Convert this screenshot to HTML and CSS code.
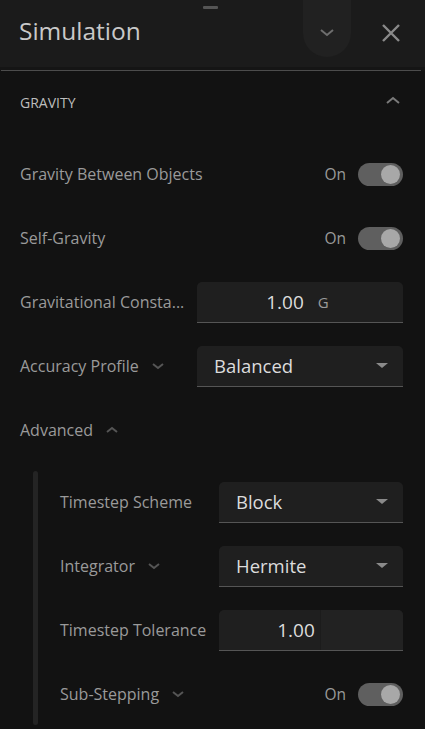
FILE: index.html
```html
<!DOCTYPE html>
<html>
<head>
<meta charset="utf-8">
<link rel="stylesheet" href="styles.css">
</head>
<body>
<div class="sheet">
  <div class="header">
    <div class="handle"></div>
    <h1 class="title">Simulation</h1>
    <div class="header-actions">
      <div class="pill">
        <svg width="16" height="9" viewBox="0 0 16 9"><path d="M2 2 L8 7 L14 2" fill="none" stroke="#6e6e6e" stroke-width="2"/></svg>
      </div>
      <div class="close">
        <svg width="20" height="20" viewBox="0 0 20 20"><path d="M2 2 L18 18 M18 2 L2 18" fill="none" stroke="#8a8a8a" stroke-width="2.4"/></svg>
      </div>
    </div>
  </div>
  <div class="sep"><div class="sep-line"></div></div>

  <div class="section-head">
    <span class="section-title">GRAVITY</span>
    <svg class="sec-chev" width="16" height="9" viewBox="0 0 16 9"><path d="M2 7 L8 2 L14 7" fill="none" stroke="#7a7a7a" stroke-width="2"/></svg>
  </div>

  <div class="rows">
    <div class="row">
      <span class="label">Gravity Between Objects</span>
      <div class="switch-wrap"><span class="on">On</span><span class="toggle"><span class="knob"></span></span></div>
    </div>
    <div class="row">
      <span class="label">Self-Gravity</span>
      <div class="switch-wrap"><span class="on">On</span><span class="toggle"><span class="knob"></span></span></div>
    </div>
    <div class="row">
      <span class="label">Gravitational Consta...</span>
      <div class="field wide number"><span class="num">1.00</span><span class="unit">G</span></div>
    </div>
    <div class="row">
      <span class="label">Accuracy Profile <svg class="lchev" width="14" height="8" viewBox="0 0 14 8"><path d="M2 2 L7 6 L12 2" fill="none" stroke="#555" stroke-width="2"/></svg></span>
      <div class="field wide select"><span class="sel-text">Balanced</span><span class="caret"></span></div>
    </div>
    <div class="row">
      <span class="label">Advanced <svg class="lchev" width="14" height="8" viewBox="0 0 14 8"><path d="M2 6 L7 2 L12 6" fill="none" stroke="#555" stroke-width="2"/></svg></span>
    </div>
  </div>

  <div class="nested">
    <div class="nest-bar"></div>
    <div class="nest-rows">
      <div class="row">
        <span class="label">Timestep Scheme</span>
        <div class="field narrow select"><span class="sel-text">Block</span><span class="caret"></span></div>
      </div>
      <div class="row">
        <span class="label">Integrator <svg class="lchev" width="14" height="8" viewBox="0 0 14 8"><path d="M2 2 L7 6 L12 2" fill="none" stroke="#555" stroke-width="2"/></svg></span>
        <div class="field narrow select"><span class="sel-text">Hermite</span><span class="caret"></span></div>
      </div>
      <div class="row">
        <span class="label">Timestep Tolerance</span>
        <div class="field narrow number"><span class="num">1.00</span><span class="unit"></span><span class="shade"></span></div>
      </div>
      <div class="row">
        <span class="label">Sub-Stepping <svg class="lchev" width="14" height="8" viewBox="0 0 14 8"><path d="M2 2 L7 6 L12 2" fill="none" stroke="#555" stroke-width="2"/></svg></span>
        <div class="switch-wrap"><span class="on">On</span><span class="toggle"><span class="knob"></span></span></div>
      </div>
    </div>
  </div>
</div>
</body>
</html>
```
FILE: styles.css
```css
* { box-sizing: border-box; }
html, body { margin: 0; padding: 0; background: #121212; }
body {
  font-family: "Open Sans", "Noto Sans", sans-serif;
  width: 425px;
  height: 729px;
  overflow: hidden;
}
.sheet { width: 425px; }

.header {
  position: relative;
  height: 67px;
  background: #1b1b1b;
  display: flex;
  align-items: center;
  justify-content: space-between;
  padding-left: 19px;
}
.handle {
  position: absolute;
  left: 203px;
  top: 6px;
  width: 15px;
  height: 3px;
  border-radius: 1px;
  background: #555;
}
.title {
  margin: 0;
  font-size: 24.5px;
  font-weight: 400;
  color: #c9c9c9;
  line-height: 1;
  margin-top: -4px;
}
.header-actions {
  display: flex;
  align-items: flex-start;
  height: 67px;
}
.pill {
  width: 48px;
  height: 57px;
  background: #212121;
  border-radius: 0 0 24px 24px;
  display: flex;
  align-items: center;
  justify-content: center;
  padding-top: 7px;
  margin-right: 30px;
}
.close {
  width: 20px;
  height: 20px;
  margin-top: 23px;
  margin-right: 24px;
}
.close svg { display: block; }

.sep { height: 4px; background: #151515; position: relative; }
.sep-line { position: absolute; left: 1px; right: 4px; bottom: 0; height: 1px; background: #4c4c4c; }

.section-head {
  height: 62px;
  display: flex;
  align-items: center;
  justify-content: space-between;
  padding: 0 24px 0 20px;
}
.section-title { font-size: 14px; color: #bdbdbd; letter-spacing: 0; }
.sec-chev { margin-top: -4px; }

.rows { margin-top: 9px; padding: 0 22px 0 20px; }
.row {
  height: 64px;
  display: flex;
  align-items: center;
  justify-content: space-between;
}
.label {
  font-size: 16px;
  color: #9a9a9a;
  white-space: nowrap;
  display: flex;
  align-items: center;
}
.lchev { margin-left: 12px; }

.switch-wrap { display: flex; align-items: center; }
.on { font-size: 15.5px; color: #9a9a9a; margin-right: 12px; }
.toggle {
  width: 45px;
  height: 23px;
  border-radius: 12px;
  background: #5f5f5f;
  position: relative;
  display: block;
}
.knob {
  position: absolute;
  right: 3px;
  top: 2px;
  width: 19px;
  height: 19px;
  border-radius: 50%;
  background: #a8a8a8;
}

.field {
  height: 41px;
  background: #1f1f1f;
  border-radius: 5px 5px 0 0;
  border-bottom: 1px solid #555;
  display: flex;
  align-items: center;
  position: relative;
}
.field.wide { width: 206px; }
.field.narrow { width: 184px; }
.number { justify-content: center; }
.num { font-size: 19px; color: #dcdcdc; position: relative; z-index: 1; }
.unit { font-size: 15px; color: #9a9a9a; width: 16px; margin-left: 14px; }
.shade {
  position: absolute;
  left: 101px;
  top: 0;
  right: 0;
  bottom: 0;
  background: #222222;
  border-left: 1px solid #1c1c1c;
  border-radius: 0 5px 0 0;
}
.select { justify-content: space-between; padding: 0 15px 0 17px; }
.sel-text { font-size: 18.5px; color: #dcdcdc; }
.caret {
  width: 0;
  height: 0;
  border-left: 6px solid transparent;
  border-right: 6px solid transparent;
  border-top: 5px solid #8a8a8a;
}

.nested {
  margin-top: 8px;
  display: flex;
  padding-left: 33px;
  padding-right: 22px;
}
.nest-bar {
  width: 5px;
  background: #242424;
  border-radius: 3px;
  margin-top: 1px;
  height: 254px;
}
.nest-rows { flex: 1; padding-left: 22px; }
```
